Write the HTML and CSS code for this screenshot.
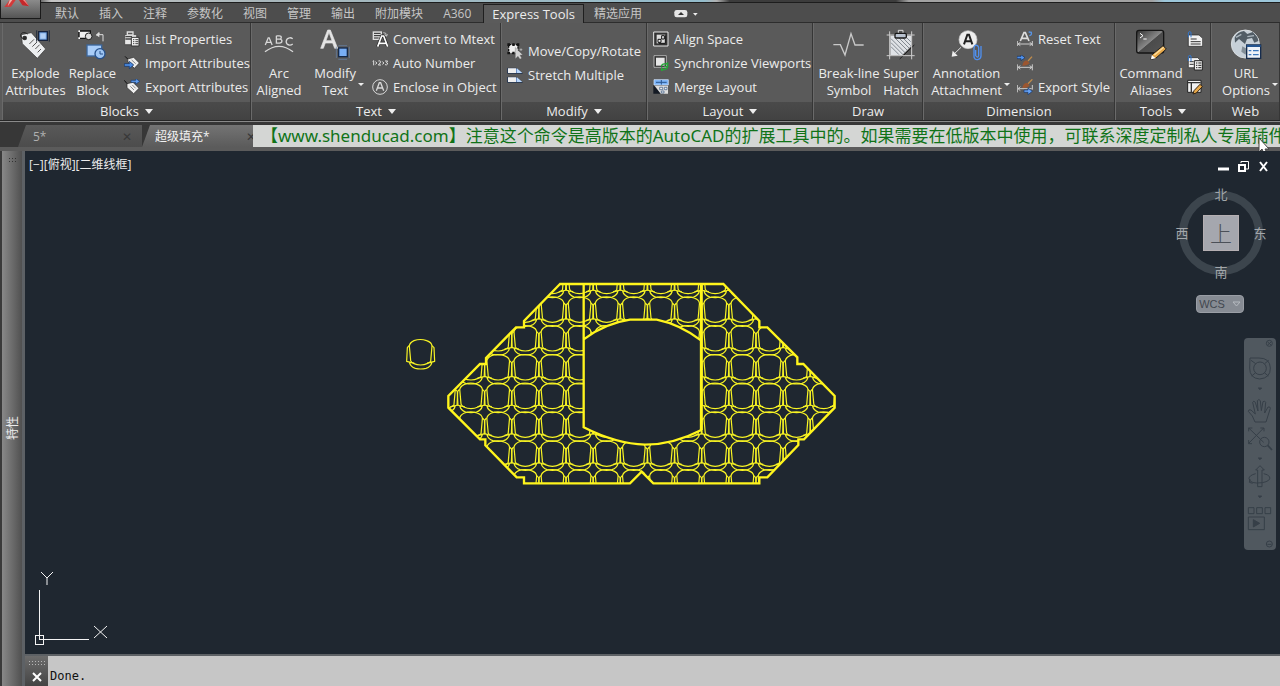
FILE: index.html
```html
<!DOCTYPE html>
<html lang="zh-CN">
<head>
<meta charset="utf-8">
<title>AutoCAD</title>
<link rel="stylesheet" href="styles.css">
</head>
<body>
<div class="title-edge"></div>
<header class="menu">
  <button class="logo" aria-label="A"><svg width="39" height="17" viewBox="0 0 117 51"><path d="M10 21 26 0h18L30 20z" fill="#d23a3a"/><path d="M46 0h26l12 19-20-3L54 0z" fill="#c4282b"/><path d="M26 0h8L20 19z" fill="#efb2ac"/><path d="M66 0h6l12 19z" fill="#f08a84"/></svg></button>
  <nav class="tabs">
    <button class="tab">默认</button><button class="tab">插入</button><button class="tab">注释</button><button class="tab">参数化</button><button class="tab">视图</button><button class="tab">管理</button><button class="tab">输出</button><button class="tab">附加模块</button><button class="tab">A360</button><button class="tab active">Express Tools</button><button class="tab">精选应用</button>
    <button class="tab toggle" aria-label="▲"><svg width="26" height="10" viewBox="0 0 78 30"><rect x="1" y="3" width="39" height="22" rx="7" fill="#e6e6e6"/><path d="M12 18 21 9l9 9z" fill="#333"/><path d="M57 12h14l-7 8z" fill="#eee"/></svg></button>
  </nav>
</header>

<main class="ribbon">
  <section class="panel">
    <div class="tools">
      <button class="big w57"><svg width="32" height="32" viewBox="60 90 96 96"><path d="M64 107 94 101l43 49-25 28-45-44z" fill="#eceef0" stroke="#333" stroke-width="2"/><circle cx="74" cy="117" r="7" fill="#333"/><path d="M83 105c-12-8-21-4-21 5s10 10 16 6" fill="none" stroke="#222" stroke-width="3"/><path d="M88 135l14-14M97 143l14-14M106 150l13-13M113 160l10-10" stroke="#555" stroke-width="3"/><rect x="116" y="98" width="26" height="26" fill="#73a7e8" stroke="#17233c" stroke-width="4"/><rect x="121" y="103" width="16" height="16" fill="#b3d0f4"/><path d="M110 94v34M148 94v34" stroke="#222c3c" stroke-width="3"/></svg><span>Explode<br>Attributes</span></button>
      <button class="big w57"><svg width="32" height="32" viewBox="232 90 96 96"><path d="M238 96h34v22h-34z" fill="#eee" stroke="#111" stroke-width="4"/><path d="M236 94h5v5h-5zM236 115h5v5h-5z" fill="#fff"/><circle cx="267" cy="112" r="10" fill="#ddd" stroke="#222" stroke-width="3"/><path d="M289 109l9-8v6h12v20" fill="none" stroke="#ddd" stroke-width="3"/><path d="M289 108l10-8v15z" fill="#ddd"/><rect x="262" y="138" width="44" height="33" fill="#a9cdf8" stroke="#3c679c" stroke-width="4"/><circle cx="301" cy="164" r="15" fill="#9fc6f4" stroke="#27518c" stroke-width="4"/><path d="M301 156v9h9" fill="none" stroke="#27518c" stroke-width="3"/></svg><span>Replace<br>Block</span></button>
      <div class="rows">
        <button class="row"><svg width="16" height="16" viewBox="369 94 48 48"><path d="M371 105h36v30h-36z" fill="#e7e7e7" stroke="#333" stroke-width="2"/><path d="M379 97h17v9h-17z" fill="none" stroke="#ddd" stroke-width="4"/><path d="M373 111h20M373 118h18" stroke="#444" stroke-width="4"/><path d="M391 113h23v26h-23z" fill="#f4f4f4" stroke="#333" stroke-width="3"/><path d="M396 120h4M403 120h9M396 126h4M403 126h9M396 132h4M403 132h9" stroke="#444" stroke-width="3"/></svg>List Properties</button>
        <button class="row"><svg width="16" height="16" viewBox="369 168 48 48"><path d="M380 180l18-5 17 17-15 16-19-19z" fill="#eee" stroke="#222" stroke-width="2"/><path d="M380 180l-8-8" stroke="#111" stroke-width="3"/><path d="M392 183l12 11M388 190l10 8" stroke="#555" stroke-width="2"/><path d="M370 194h15v-7l13 11-13 11v-7h-15z" fill="#4b8ae0" stroke="#123062" stroke-width="2"/></svg>Import Attributes</button>
        <button class="row"><svg width="16" height="16" viewBox="369 240 48 48"><path d="M378 254l18-4 18 18-16 16-20-18z" fill="#eee" stroke="#222" stroke-width="2"/><path d="M378 254l-8-10" stroke="#111" stroke-width="3"/><path d="M388 262l11 11M394 258l10 10" stroke="#555" stroke-width="2"/><path d="M390 244h14v-6l12 9-12 9v-6h-14z" fill="#5e9bed" stroke="#17386c" stroke-width="2"/></svg>Export Attributes</button>
      </div>
    </div>
    <button class="name">Blocks <i class="caret"></i></button>
  </section>

  <section class="panel">
    <div class="tools">
      <button class="big w46"><svg width="32" height="32" viewBox="38 90 98 98" fill="none" stroke="#d8d8d8" stroke-width="4"><path d="M45 139l9-22h3l9 22M49 131h13M79 111v22h9q8 0 8-6t-7-6h-10M79 111h9q6 0 6 5t-5 5M129 120q-5-4-10-3-9 1-10 11 0 9 9 11 6 1 11-3"/><path d="M44 160q43-34 86 0"/></svg><span>Arc<br>Aligned</span></button>
      <button class="big w62 drop"><span class="stack"><svg width="32" height="32" viewBox="208 88 96 96"><path d="M213 146l21-55h8l22 55h-9l-6-16h-22l-6 16zm16-23h18l-9-25z" fill="#e4e4e4" stroke="#e4e4e4" stroke-width="2"/><rect x="267" y="145" width="26" height="26" fill="#78aef5" stroke="#152949" stroke-width="4"/><path d="M260 141v34M299 141v34M266 138h26M266 179h26" stroke="#6684aa" stroke-width="2"/></svg><span>Modify<br>Text</span></span><i class="caret tiny"></i></button>
      <div class="rows">
        <button class="row"><svg width="16" height="16" viewBox="366 94 48 48"><path d="M368 95h28v26h-28z" fill="#ddd"/><path d="M372 101h20M372 108h20M372 115h14" stroke="#222" stroke-width="3"/><path d="M383 141l12-32h6l12 32M388 131h20" fill="none" stroke="#222" stroke-width="9"/><path d="M383 141l12-32h6l12 32M388 131h20" fill="none" stroke="#fff" stroke-width="5"/><path d="M400 99q10-1 9 9M404 104l5 6 4-6" fill="none" stroke="#eee" stroke-width="2"/></svg>Convert to Mtext</button>
        <button class="row"><svg width="16" height="16" viewBox="366 168 48 48" fill="none" stroke="#ddd" stroke-width="3"><path d="M368 187l3-2v14M376 188l5 4-5 4M385 186q7-2 7 2 0 3-7 10h8M397 188l5 4-5 4M405 186h8l-4 5q5 0 4 4-2 4-8 2"/></svg>Auto Number</button>
        <button class="row"><svg width="16" height="16" viewBox="366 238 48 48" fill="none" stroke="#d8d8d8"><circle cx="390" cy="262" r="22" stroke-width="3"/><path d="M379 273l9-24h4l9 24M383 265h14" stroke-width="4"/></svg>Enclose in Object</button>
      </div>
    </div>
    <button class="name">Text <i class="caret"></i></button>
  </section>

  <section class="panel">
    <div class="tools">
      <div class="rows middle">
        <button class="row"><svg width="16" height="16" viewBox="20 128 48 48"><rect x="25" y="133" width="28" height="26" fill="#eee" stroke="#111" stroke-width="4" stroke-dasharray="7 4"/><path d="M21 129h8v8h-8zM36 129h7v8h-7zM49 129h8v8h-8zM21 154h8v8h-8zM36 154h7v8h-7z" fill="#151515"/><path d="M45 142v33l8-7 6 9 5-4-5-8 8-2z" fill="#d2d2d2" stroke="#555" stroke-width="1"/><path d="M62 144v8M58 148h8" stroke="#ccc" stroke-width="2"/></svg>Move/Copy/Rotate</button>
        <button class="row"><svg width="16" height="16" viewBox="20 200 48 48"><path d="M22 204h26l18 15H22zM22 231h26l18 15H22z" fill="#2e62b5" stroke="#15223a" stroke-width="2"/><path d="M23 204h25v14H23zM23 231h25v14H23z" fill="#eee"/><path d="M50 204l16 14H50zM50 231l16 14H50z" fill="#b9d6fa"/></svg>Stretch Multiple</button>
      </div>
    </div>
    <button class="name">Modify <i class="caret"></i></button>
  </section>

  <section class="panel">
    <div class="tools">
      <div class="rows inset">
        <button class="row"><svg width="16" height="16" viewBox="459 94 48 48"><path d="M461 97h43v42h-43z" fill="#333" stroke="#e8e8e8" stroke-width="3"/><path d="M470 105h26v26h-26z" fill="#ddd"/><path d="M485 108h8v10h-8zM474 119h9v9h-9z" fill="#eee" stroke="#111" stroke-width="3"/><path d="M496 107v24h-20" fill="none" stroke="#111" stroke-width="3"/></svg>Align Space</button>
        <button class="row"><svg width="16" height="16" viewBox="459 166 48 48"><path d="M462 168h37v35h-37z" fill="#333" stroke="#ddd" stroke-width="2"/><path d="M468 174h26v24h-26z" fill="#e6e6e6"/><path d="M484 200q2-9 13-7l6-3v11h-11M503 202q-3 9-12 7l-6 3v-9" fill="none" stroke="#24a836" stroke-width="4"/></svg>Synchronize Viewports</button>
        <button class="row"><svg width="16" height="16" viewBox="459 238 48 48"><path d="M462 240h43v16h-43z" fill="#79b2f6" stroke="#dcebff" stroke-width="2"/><path d="M484 241v14M468 248h32" stroke="#2b5791" stroke-width="3"/><path d="M460 256l24 26h-24z" fill="#151b25"/><path d="M464 258h40v24h-22z" fill="#ddd"/><path d="M479 263h9v7h-9zM493 263h8v7h-8zM484 274h8v6h-8z" fill="#eee" stroke="#34557f" stroke-width="2"/></svg>Merge Layout</button>
      </div>
    </div>
    <button class="name">Layout <i class="caret"></i></button>
  </section>

  <section class="panel">
    <div class="tools">
      <button class="big w62"><svg width="32" height="32" viewBox="232 88 96 96"><path d="M233 135h21l14 31 18-64 12 34h26" fill="none" stroke="#c9c9c9" stroke-width="4"/></svg><span>Break-line<br>Symbol</span></button>
      <button class="big w42"><svg width="32" height="32" viewBox="388 88 96 96"><path d="M404 108h63v58h-63z" fill="#dfe2e6"/><path d="M406 117l48 48M406 129l36 36M406 141l24 24M416 113l46 46M428 113l37 37M440 113l25 25M452 113l13 13" stroke="#828991" stroke-width="3"/><path d="M440 166l26-26v26z" fill="#555"/><path d="M432 178l44-42" stroke="#1c1c1c" stroke-width="3"/><path d="M402 95v84M468 95v84M393 106h84M393 168h84" stroke="#ccc" stroke-width="3"/><path d="M428 101v-9h14v9" fill="none" stroke="#ddd" stroke-width="3"/><rect x="418" y="101" width="34" height="14" rx="4" fill="#b9c2cf" stroke="#181818" stroke-width="4"/></svg><span>Super<br>Hatch</span></button>
    </div>
    <button class="name">Draw</button>
  </section>

  <section class="panel">
    <div class="tools">
      <button class="big w82 drop"><span class="stack"><svg width="32" height="32" viewBox="594 88 96 96"><path d="M598 168l26-25" stroke="#ddd" stroke-width="3"/><path d="M596 171l3-18 15 15z" fill="#eee"/><circle cx="645" cy="120" r="27" fill="#eee" stroke="#ccc" stroke-width="2"/><path d="M633 134l10-29h5l10 29M637 125h17" fill="none" stroke="#222" stroke-width="6"/><path d="M668 151v17q7 9 9-1v-23q-2-9-10-7-4 2-4 9v26q3 10 13 7 8-2 8-11v-29" fill="none" stroke="#4f8fee" stroke-width="4"/></svg><span>Annotation<br>Attachment</span></span><i class="caret tiny"></i></button>
      <div class="rows">
        <button class="row"><svg width="16" height="16" viewBox="22 94 48 48"><path d="M32 124l11-25h4l11 25M36 116h18" fill="none" stroke="#ddd" stroke-width="5"/><path d="M57 97l8 1q2 8-6 10" fill="none" stroke="#5894e4" stroke-width="4"/><path d="M23 124v15M68 124v15M25 133h41M32 128l-7 5 7 5M60 128l7 5-7 5" fill="none" stroke="#ccc" stroke-width="3"/></svg>Reset Text</button>
        <button class="row" aria-label="Import"><svg width="16" height="16" viewBox="22 166 48 48"><path d="M22 170h12v-5l12 9-12 9v-6H22z" fill="#4f91ed" stroke="#162e55" stroke-width="2"/><path d="M55 184l12-13" stroke="#c28c4a" stroke-width="4"/><path d="M38 198q3-17 15-15l7 8q-9 9-22 7z" fill="#9b5630"/><path d="M23 194v18M68 194v18M25 203h41M32 198l-7 5 7 5M60 198l7 5-7 5" fill="none" stroke="#ccc" stroke-width="3"/></svg></button>
        <button class="row"><svg width="16" height="16" viewBox="22 238 48 48"><path d="M55 252l13-13" stroke="#c28c4a" stroke-width="4"/><path d="M38 265q3-17 15-15l7 8q-9 9-22 7z" fill="#9b5630"/><path d="M23 256v22M68 256v14M25 267h41M32 261l-7 6 7 6" fill="none" stroke="#ccc" stroke-width="3"/><path d="M43 271h12v-6l13 10-13 10v-7H43z" fill="#65a1f4" stroke="#17386c" stroke-width="2"/></svg>Export Style</button>
      </div>
    </div>
    <button class="name">Dimension</button>
  </section>

  <section class="panel">
    <div class="tools">
      <button class="big w62"><svg width="32" height="32" viewBox="372 88 96 96"><defs><linearGradient id="scr" x2="1" y2="1"><stop stop-color="#303030"/><stop offset=".5" stop-color="#888"/><stop offset=".52" stop-color="#4b4b4b"/><stop offset="1" stop-color="#555"/></linearGradient></defs><rect x="377" y="92" width="81" height="68" rx="7" fill="url(#scr)" stroke="#151515" stroke-width="4"/><path d="M387 101l9 7-9 7M397 118h10" fill="none" stroke="#fff" stroke-width="3"/><path d="M422 166l34-28 10 10-32 28-14 3z" fill="#e8a94a" stroke="#222" stroke-width="3"/><path d="M422 166l12 10-14 3z" fill="#fff"/><path d="M430 166l28-23" stroke="#ffe0a0" stroke-width="4"/></svg><span>Command<br>Aliases</span></button>
      <div class="rows">
        <button class="row" aria-label="Attach"><svg width="16" height="16" viewBox="534 92 48 48"><path d="M538 104h32l11 10v24h-43z" fill="#f2f2f2" stroke="#222" stroke-width="2"/><path d="M545 116h18M545 124h30M545 131h30" stroke="#333" stroke-width="3"/><path d="M546 111V96q-6-6-8 2v13" fill="none" stroke="#3277cf" stroke-width="3"/></svg></button>
        <button class="row" aria-label="List"><svg width="16" height="16" viewBox="534 166 48 48"><path d="M538 174h28l8 8v22h-36z" fill="#f2f2f2" stroke="#222" stroke-width="2"/><path d="M542 186h12M542 194h12" stroke="#333" stroke-width="3"/><path d="M556 183h24v28h-24z" fill="#eee" stroke="#222" stroke-width="3"/><path d="M561 190h4M568 190h9M561 197h4M568 197h9M561 204h4M568 204h9" stroke="#222" stroke-width="3"/><path d="M546 185v-16q-6-6-8 2v13" fill="none" stroke="#3277cf" stroke-width="3"/></svg></button>
        <button class="row" aria-label="Edit"><svg width="16" height="16" viewBox="534 238 48 48"><path d="M536 242h40v36h-40z" fill="#f2f2f2" stroke="#222" stroke-width="3"/><path d="M537 249h38M547 249v29" stroke="#333" stroke-width="4"/><path d="M555 273l18-19 7 7-18 19-10 3z" fill="#e8a94a" stroke="#321" stroke-width="3"/></svg></button>
      </div>
    </div>
    <button class="name">Tools <i class="caret"></i></button>
  </section>

  <section class="panel">
    <div class="tools">
      <button class="big w62 drop"><span class="stack"><svg width="32" height="32" viewBox="658 90 96 96"><circle cx="704" cy="135" r="42" fill="#c7d0d8" stroke="#d8dde0" stroke-width="3"/><path d="M672 116q8-18 28-20l10 9 16-6q16 14 17 27l-12 5-7-14-15 3-6 15-18-15-12 11z" fill="#525d66"/><path d="M695 142l14 8-4 17-13-9z" fill="#828e97"/><path d="M676 115l16-9M710 113l20-3" stroke="#aeb8bf" stroke-width="4"/><path d="M708 138h42v40h-42z" fill="#eef2f8" stroke="#162c4d" stroke-width="4"/><path d="M708 141h42" stroke="#24548f" stroke-width="6"/><path d="M714 155h8M727 155h17M714 167h8M727 167h17" stroke="#3c77bc" stroke-width="4"/></svg><span>URL<br>Options</span></span><i class="caret tiny"></i></button>
    </div>
    <button class="name">Web</button>
  </section>
</main>

<div class="files">
  <button class="file">5*<span class="close">✕</span></button>
  <button class="file current">超级填充*<span class="close">✕</span></button>
  <div class="banner">【www.shenducad.com】注意这个命令是高版本的AutoCAD的扩展工具中的。如果需要在低版本中使用，可联系深度定制私人专属插件</div>
  <svg class="pointer" width="12" height="20" viewBox="0 0 12 20"><path d="M1 1v14l3-3 3 7 3-1-3-6h4z" fill="#fff" stroke="#444"/></svg>
</div>

<div class="work">
  <aside class="palette"><span class="grip"></span><span class="side">特性</span></aside>
  <div class="view">
    <div class="stage">
      <div class="viewname">[−][俯视][二维线框]</div>
      <svg class="plan" width="450" height="225" viewBox="0 0 1350 675">
        <defs>
          <g id="tile" fill="none" stroke="#f8f424" stroke-width="3.6" stroke-linejoin="round">
            <path d="M8 20Q9 10 22 4Q41-3 60 4Q75 9 76 20L72 66Q68 70 63 72Q42 82 20 72Q15 70 12 64Z"/>
            <path d="M7 19L2 25L0 66L12 69M76 19L82 25L84 66L72 69"/>
            <path d="M8 69Q12 83 26 87Q42 91 58 87Q72 83 76 69M8 69L23 71M76 69L61 71"/>
          </g>
          <g id="four"><use href="#tile"/><use href="#tile" x="81.4"/><use href="#tile" x="162.8"/><use href="#tile" x="244.2"/></g>
          <g id="course"><use href="#four" x="89.8"/><use href="#four" x="415.4"/><use href="#four" x="741"/><use href="#four" x="1066.600"/></g>
          <clipPath id="inside"><path clip-rule="evenodd" d="M480 42L372 153V172H348L258 264L256 282H240L145 378V413L240 508H256V526L350 622H372V640H690L725 605L760 640H1078V622H1102L1195 525V508H1212L1304 413V378L1210 282H1192V262L1102 172H1078V153L970 42ZM551 208Q615 160 690 149H770Q840 163 904 212V480Q820 524 735 524Q650 522 551 472Z"/></clipPath>
        </defs>
        <use href="#tile" x="20" y="208"/>
        <g clip-path="url(#inside)">
          <use href="#course" y="-6"/><use href="#course" y="80"/><use href="#course" y="166"/><use href="#course" y="253"/><use href="#course" y="339"/><use href="#course" y="425"/><use href="#course" y="512"/><use href="#course" y="598"/>
        </g>
        <g fill="none" stroke="#fff51c">
          <path stroke-width="7" d="M480 42L372 153V172H348L258 264V282H240L145 378V413L240 508H256V526L350 622H372V640H690L725 605L760 640H1078V622H1102L1195 525V508H1212L1304 413V378L1210 282H1192V262L1102 172H1078V153L970 42Z"/>
          <path stroke-width="7" d="M551 42V472Q650 522 735 524Q820 524 904 480M551 208Q615 160 690 149H770Q840 163 904 212"/>
          <path stroke-width="9" d="M904 42V480"/>
        </g>
      </svg>
      <svg class="ucs" width="76" height="76" viewBox="0 0 76 76" fill="none" stroke="#f4f4f4" shape-rendering="crispEdges"><path d="M5.500 20V69.500H55M1 65.500H9.500V74H1Z"/><path shape-rendering="auto" d="M7 2l6 6 6-6M13 8v7M60 56l13 12M73 56L60 68"/></svg>
      <div class="winbtns">
        <button aria-label="Minimize"><svg width="11" height="11"><path d="M0 8h11" stroke="#fff" stroke-width="3"/></svg></button>
        <button aria-label="Restore"><svg width="11" height="11" fill="none" stroke="#fff"><path stroke-width="2" d="M1 4h6v6H1z"/><path d="M3 2V.5h7.500V8H8"/></svg></button>
        <button aria-label="Close"><svg width="11" height="11"><path d="M2 1l7 9M9 1L2 10" stroke="#fff" stroke-width="2"/></svg></button>
      </div>
      <div class="compass">
        <div class="ring"></div>
        <span class="n">北</span><span class="w">西</span><button class="top">上</button><span class="e">东</span><span class="s">南</span>
      </div>
      <button class="wcs">WCS <svg width="9" height="6"><path d="M1 1h7L4.500 5z" fill="none" stroke="#b5bac0"/></svg></button>
      <div class="navbar"><svg width="32" height="212" viewBox="57 38 96 636" fill="none" stroke="#363f48" stroke-width="3">
        <circle cx="133" cy="54" r="9"/><path d="M128 50l10 9M138 50l-10 9"/>
        <circle cx="105" cy="129" r="19"/><path d="M75 98h27q33 0 34 30t-32 33q-30-2-30-33zM78 105l14 10M131 105l-12 10M80 152l12-10M130 152l-12-10"/>
        <path d="M100 188h10l-5 5zM100 398h10l-5 5zM100 512h10l-5 5z" fill="#363f48"/>
        <path d="M90 290q-6-20-20-32 0-7 8-4l13 12-8-35q3-7 8 0l8 26-2-31q5-7 9 0l3 30 5-27q6-4 8 2l-3 32 10-18q7-2 7 4l-13 41z"/>
        <path d="M71 308l45 43M116 308l-45 46M71 318v-10h11M106 308h11v10M71 344v11h10"/><circle cx="118" cy="350" r="14"/><path d="M128 360l13 14" stroke-width="5"/>
        <path d="M98 484v-50h-6l13-13 13 13h-7v50zM92 445q-20 5-20 15 3 17 40 12 26-5 22-17-4-8-18-10M83 474l-10-3 2-10"/>
        <path d="M70 547h17v18H70zM95 547h17v18H95zM120 547h17v18h-17zM70 575h48v38H70z"/><path d="M85 583v22l19-11z" fill="#363f48"/>
        <circle cx="133" cy="656" r="9"/><path d="M127 657h12"/></svg></div>
    </div>
    <div class="command">
      <div class="handle"><span class="grip"></span><button aria-label="Close"><svg width="10" height="10"><path d="M1 1l8 8M9 1L1 9" stroke="#fff" stroke-width="2"/></svg></button></div>
      <input type="text" value="Done." aria-label="Command">
    </div>
  </div>
</div>
</body>
</html>
```
FILE: styles.css
```css
* { box-sizing: border-box; }
body {
  margin: 0;
  min-height: 100vh;
  display: flex;
  flex-direction: column;
  overflow: hidden;
  background: #3a3a3a;
  color: #ececec;
  font: 13px/17px "Open Sans", "Noto Sans CJK SC", sans-serif;
}
button {
  margin: 0;
  padding: 0;
  border: 0;
  background: none;
  color: inherit;
  font: inherit;
}
svg { display: block; flex: none; }

.title-edge {
  height: 3px;
  border-bottom: 1px solid #1d1d1d;
  background: linear-gradient(90deg, #555 3%, #c4c4c4 4%, #a9b6ba 20%, #94bccb 55%, #b0b0b0 56%, #3c3c3c 57%, #3c3c3c 70%, #a2a2a2 71%, #a2a2a2 90%, #9cc6da 91%);
}
.menu {
  display: flex;
  height: 20px;
  background: #4d4d4d;
  border-bottom: 1px solid #2d2d2d;
}
.logo {
  display: flex;
  align-items: flex-start;
  width: 41px;
  height: 19px;
  margin-top: -3px;
  border: 1px solid #1a1a1a;
  border-top: 0;
  background: linear-gradient(#8b8b8b, #555);
}
.tabs { display: flex; padding-left: 4px; }
.tab {
  height: 19px;
  margin-top: 1px;
  padding: 0 10px;
  color: #c6c6c6;
  font-size: 12px;
  white-space: nowrap;
}
.tab.active {
  margin-left: 2px;
  padding: 0 8px;
  border: 1px solid #1f1f1f;
  border-bottom: 0;
  background: #5b5b5b;
  color: #ececec;
  font-size: 13px;
}
.tab.toggle { padding-left: 22px; }

.ribbon {
  display: grid;
  grid-template-columns: 249fr 250fr 146fr 166fr 110fr 192fr 96fr 69fr;
  height: 98px;
  padding-left: 2px;
  border-bottom: 1px solid #262626;
  background: #5a5a5a;
}
.panel {
  display: flex;
  flex-direction: column;
  min-width: 0;
  border-right: 1px solid #363636;
  border-left: 1px solid #6a6a6a;
}
.tools {
  display: flex;
  flex: 1;
  padding: 4px 0 0 4px;
}
.name {
  display: flex;
  align-items: center;
  justify-content: center;
  gap: 6px;
  height: 18px;
  background: linear-gradient(#4a4a4a, #424242);
}
.caret {
  border: 4px solid transparent;
  border-top: 5px solid #eee;
  border-bottom: 0;
}
.caret.tiny {
  border-width: 3px 3px 0;
  margin-top: 40px;
}
.big, .stack {
  display: flex;
  flex-direction: column;
  align-items: center;
  gap: 4px;
  white-space: nowrap;
}
.big {
  height: 72px;
  padding-top: 2px;
}
.big.drop {
  flex-direction: row;
  justify-content: flex-end;
  gap: 2px;
}
.w42 { width: 42px; }
.w46 { width: 46px; }
.w57 { width: 57px; }
.w62 { width: 62px; }
.w82 { width: 82px; }
.rows { padding-left: 3px; }
.w82 + .rows { padding-left: 7px; }
.w62 + .rows { padding-left: 5px; }
.w46 ~ .rows { padding-left: 8px; }
.rows.middle { padding-top: 12px; }
.rows.middle, .rows.inset { padding-left: 1px; }
.row {
  display: flex;
  align-items: center;
  gap: 5px;
  height: 24px;
  white-space: nowrap;
}

.files {
  position: relative;
  display: flex;
  align-items: flex-end;
  height: 30px;
  padding-left: 18px;
  border-top: 1px solid #8a8a8a;
  border-bottom: 4px solid #5b5b5b;
  background: #373737;
}
.file {
  display: flex;
  align-items: center;
  justify-content: space-between;
  flex: none;
  width: 124px;
  height: 22px;
  padding: 0 10px 0 15px;
  background: linear-gradient(#595959, #4c4c4c);
  clip-path: polygon(8px 0, 100% 0, 100% 100%, 0 100%);
  color: #b0b0b0;
  font-size: 12px;
}
.file.current {
  width: 111px;
  padding: 0 0 0 13px;
  background: linear-gradient(#747474, #5b5b5b);
  color: #f2f2f2;
}
.file.current .close { margin-right: -3px; }
.close { color: #383838; }
.banner {
  flex: 1;
  min-width: 0;
  height: 22px;
  padding-left: 8px;
  overflow: hidden;
  background: #d4d6d4;
  color: #107318;
  font-family: "Noto Sans", "Noto Sans CJK SC", sans-serif;
  font-size: 17px;
  line-height: 22px;
  white-space: nowrap;
}
.pointer { position: absolute; right: 10px; top: 15px; }

.work { display: flex; flex: 1; }
.palette {
  display: flex;
  flex-direction: column;
  align-items: center;
  width: 25px;
  padding-top: 6px;
  border-left: 2px solid #3a3a3a;
  border-right: 3px solid #5d6165;
  background: linear-gradient(90deg, #888, #6c6c6c 50%, #505050);
}
.grip {
  width: 17px;
  height: 6px;
  background: radial-gradient(circle, #b5b5b5 1px, transparent 1px) 0 0 / 3px 3px;
}
.palette .grip {
  background-image: radial-gradient(circle, #333 1px, transparent 1px);
  width: 9px;
}
.side {
  margin-top: 253px;
  writing-mode: vertical-rl;
  text-orientation: sideways;
  transform: rotate(180deg);
  font-size: 12px;
}
.view { display: flex; flex: 1; flex-direction: column; min-width: 0; }
.stage {
  position: relative;
  flex: 1;
  overflow: hidden;
  background: #1f2730;
  border-bottom: 2px solid #5d6165;
}
.viewname { padding: 5px 4px; font-size: 12px; }
.plan { position: absolute; left: 375px; top: 119px; }
.ucs { position: absolute; left: 9px; bottom: 8px; }
.winbtns { position: absolute; right: 11px; top: 10px; display: flex; gap: 9px; }
.compass {
  position: absolute;
  right: 11px;
  top: 34px;
  display: grid;
  grid-template: 18px 60px 18px / 18px 60px 18px;
  place-items: center;
  width: 96px;
  color: #a3a7ab;
  font-size: 13px;
}
.ring {
  position: absolute;
  inset: 6px;
  border: 8px solid #3c454d;
  border-radius: 50%;
}
.compass span, .compass .top { position: relative; }
.n { grid-area: 1 / 2; }
.w { grid-area: 2 / 1; }
.e { grid-area: 2 / 3; }
.s { grid-area: 3 / 2; }
.compass .top {
  grid-area: 2 / 2;
  width: 36px;
  height: 36px;
  border: 1px solid #b5afb2;
  background: #a5a7ae;
  color: #4b5058;
  font-size: 22px;
  font-weight: 300;
  line-height: 30px;
}
.wcs {
  position: absolute;
  right: 36px;
  top: 144px;
  display: flex;
  align-items: center;
  justify-content: center;
  gap: 7px;
  width: 48px;
  height: 18px;
  border: 1px solid #9a9ea5;
  border-radius: 4px;
  background: #868b93;
  color: #42474f;
  font: 11px/16px "Liberation Sans", sans-serif;
}
.navbar {
  position: absolute;
  right: 4px;
  top: 187px;
  border-radius: 4px;
  background: #50585f;
}
.command { display: flex; height: 30px; background: #c6c6c6; }
.handle {
  display: flex;
  flex-direction: column;
  align-items: center;
  gap: 6px;
  width: 23px;
  padding-top: 4px;
  background: linear-gradient(#6c6c6c, #444);
}
.command input {
  flex: 1;
  min-width: 0;
  padding: 10px 0 0 2px;
  border: 0;
  background: none;
  color: #111;
  font: 12px "DejaVu Sans Mono", monospace;
}
```
